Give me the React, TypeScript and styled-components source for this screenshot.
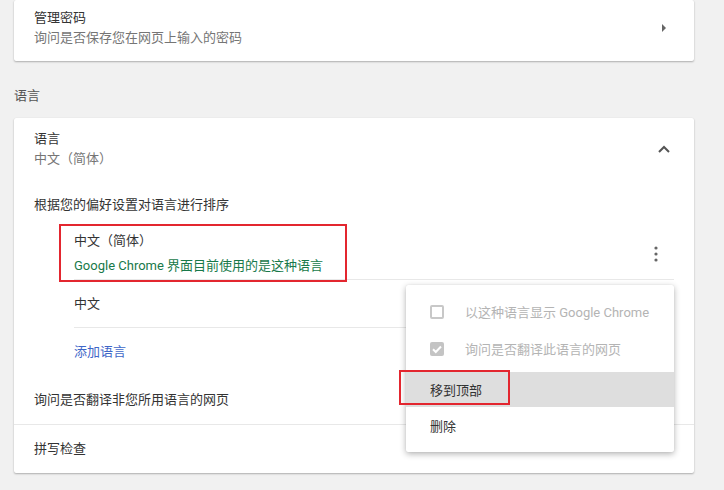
import React from 'react';
import styled, { createGlobalStyle } from 'styled-components';

const GlobalStyle = createGlobalStyle`
  html, body {
    margin: 0;
    padding: 0;
    background: #f1f1f1;
  }
  body {
    font-family: Roboto, "Noto Sans CJK SC", "Noto Sans", sans-serif;
    font-size: 13px;
    color: #333;
    overflow: hidden;
  }
`;

const Page = styled.div`
  width: 680px;
  margin-left: 14px;
  height: 490px;
`;

const Card = styled.div`
  position: relative;
  background: #fff;
  border-radius: 2px;
  box-shadow: 0 1px 2px rgba(0, 0, 0, 0.28), 0 0 1px rgba(0, 0, 0, 0.08);
`;

const Row = styled.div<{ $pt?: number; $pb?: number }>`
  display: flex;
  align-items: center;
  padding: ${({ $pt = 0, $pb = 0 }) => `${$pt}px 20px ${$pb}px 20px`};
`;

const LineRow = styled.div<{ $h: number; $border?: boolean }>`
  display: flex;
  align-items: center;
  height: ${({ $h }) => $h}px;
  padding: 0 20px;
  border-top: ${({ $border }) => ($border ? '1px solid #e8e8e8' : 'none')};
  box-sizing: border-box;
`;

const Texts = styled.div`
  flex: 1;
  display: flex;
  flex-direction: column;
`;

const Title = styled.div`
  line-height: 20px;
  color: #333;
`;

const Sub = styled.div<{ $color?: string; $mt?: number }>`
  line-height: 20px;
  color: ${({ $color }) => $color || '#757575'};
  margin-top: ${({ $mt = 0 }) => $mt}px;
`;

const Heading = styled.div`
  line-height: 20px;
  padding-top: 25px;
  margin-bottom: 12px;
  color: #555;
`;

const IconBox = styled.div`
  width: 20px;
  display: flex;
  justify-content: center;
`;

const LangList = styled.div`
  margin-left: 60px;
  margin-right: 20px;
`;

const LangItem = styled.div<{ $border?: boolean; $h?: number }>`
  display: flex;
  align-items: center;
  box-sizing: border-box;
  height: ${({ $h = 48 }) => $h}px;
  border-top: ${({ $border }) => ($border ? '1px solid #e8e8e8' : 'none')};
`;

const CurrentLang = styled.div`
  display: flex;
  align-items: flex-start;
  height: 64px;
  box-sizing: border-box;
  padding-top: 16px;
`;

const MoreButton = styled.div`
  width: 20px;
  display: flex;
  justify-content: center;
  margin-right: 8px;
  margin-top: 15px;
`;

const Link = styled.div`
  color: #3f67c8;
  line-height: 20px;
`;

const RedBox = styled.div<{ $l: number; $t: number; $w: number; $h: number }>`
  position: absolute;
  left: ${({ $l }) => $l}px;
  top: ${({ $t }) => $t}px;
  width: ${({ $w }) => $w}px;
  height: ${({ $h }) => $h}px;
  border: 2px solid #e3262f;
  box-sizing: border-box;
  pointer-events: none;
`;

const Menu = styled.div`
  position: absolute;
  left: 392px;
  top: 167px;
  width: 268px;
  padding: 8px 0 9px;
  background: #fff;
  border-radius: 2px;
  box-shadow: 0 2px 6px rgba(0, 0, 0, 0.3), 0 0 1px rgba(0, 0, 0, 0.12);
`;

const MenuItem = styled.div<{ $h: number; $active?: boolean; $disabled?: boolean; $mt?: number }>`
  display: flex;
  align-items: center;
  height: ${({ $h }) => $h}px;
  padding-left: 24px;
  margin-top: ${({ $mt = 0 }) => $mt}px;
  background: ${({ $active }) => ($active ? '#dedede' : 'transparent')};
  color: ${({ $disabled }) => ($disabled ? '#b4b4b4' : '#333')};
`;

const Check = styled.div<{ $checked?: boolean }>`
  width: 14px;
  height: 14px;
  margin-right: 21px;
  box-sizing: border-box;
  border: ${({ $checked }) => ($checked ? 'none' : '2px solid #c8c8c8')};
  background: ${({ $checked }) => ($checked ? '#c4c4c4' : 'transparent')};
  border-radius: 2px;
  display: flex;
  align-items: center;
  justify-content: center;
`;

const ArrowRight = () => (
  <svg width="8" height="10" viewBox="0 0 8 10">
    <path d="M2 1 L6 5 L2 9 Z" fill="#666" />
  </svg>
);

const ChevronUp = () => (
  <svg width="14" height="10" viewBox="0 0 14 10">
    <path d="M2 8 L7 3 L12 8" fill="none" stroke="#555" strokeWidth="2" />
  </svg>
);

const Dots = () => (
  <svg width="6" height="16" viewBox="0 0 6 16">
    <circle cx="3" cy="2" r="1.6" fill="#666" />
    <circle cx="3" cy="8" r="1.6" fill="#666" />
    <circle cx="3" cy="14" r="1.6" fill="#666" />
  </svg>
);

const Tick = () => (
  <svg width="12" height="12" viewBox="0 0 12 12">
    <path d="M2 6.2 L4.8 9 L10 3.5" fill="none" stroke="#fff" strokeWidth="2" />
  </svg>
);

export default function App() {
  return (
    <>
      <GlobalStyle />
      <Page>
        <Card>
          <Row $pt={8} $pb={13}>
            <Texts>
              <Title>管理密码</Title>
              <Sub>询问是否保存您在网页上输入的密码</Sub>
            </Texts>
            <IconBox>
              <ArrowRight />
            </IconBox>
          </Row>
        </Card>

        <Heading>语言</Heading>

        <Card>
          <Row $pt={11} $pb={26}>
            <Texts>
              <Title>语言</Title>
              <Sub>中文（简体）</Sub>
            </Texts>
            <IconBox>
              <ChevronUp />
            </IconBox>
          </Row>
          <Row>
            <Title>根据您的偏好设置对语言进行排序</Title>
          </Row>
          <LangList>
            <CurrentLang>
              <Texts>
                <Title>中文（简体）</Title>
                <Sub $color="#18794a" $mt={5}>Google Chrome 界面目前使用的是这种语言</Sub>
              </Texts>
              <MoreButton>
                <Dots />
              </MoreButton>
            </CurrentLang>
            <LangItem $border>
              <Title>中文</Title>
            </LangItem>
            <LangItem $border>
              <Link>添加语言</Link>
            </LangItem>
          </LangList>
          <LineRow $h={49}>
            <Title>询问是否翻译非您所用语言的网页</Title>
          </LineRow>
          <LineRow $h={49} $border>
            <Title>拼写检查</Title>
          </LineRow>

          <RedBox $l={45} $t={106} $w={288} $h={58} />

          <Menu>
            <MenuItem $h={37} $disabled>
              <Check />
              以这种语言显示 Google Chrome
            </MenuItem>
            <MenuItem $h={37} $disabled>
              <Check $checked>
                <Tick />
              </Check>
              询问是否翻译此语言的网页
            </MenuItem>
            <MenuItem $h={35} $active $mt={5}>
              移到顶部
            </MenuItem>
            <MenuItem $h={36}>删除</MenuItem>
            <RedBox $l={-7} $t={85} $w={111} $h={35} />
          </Menu>
        </Card>
      </Page>
    </>
  );
}
